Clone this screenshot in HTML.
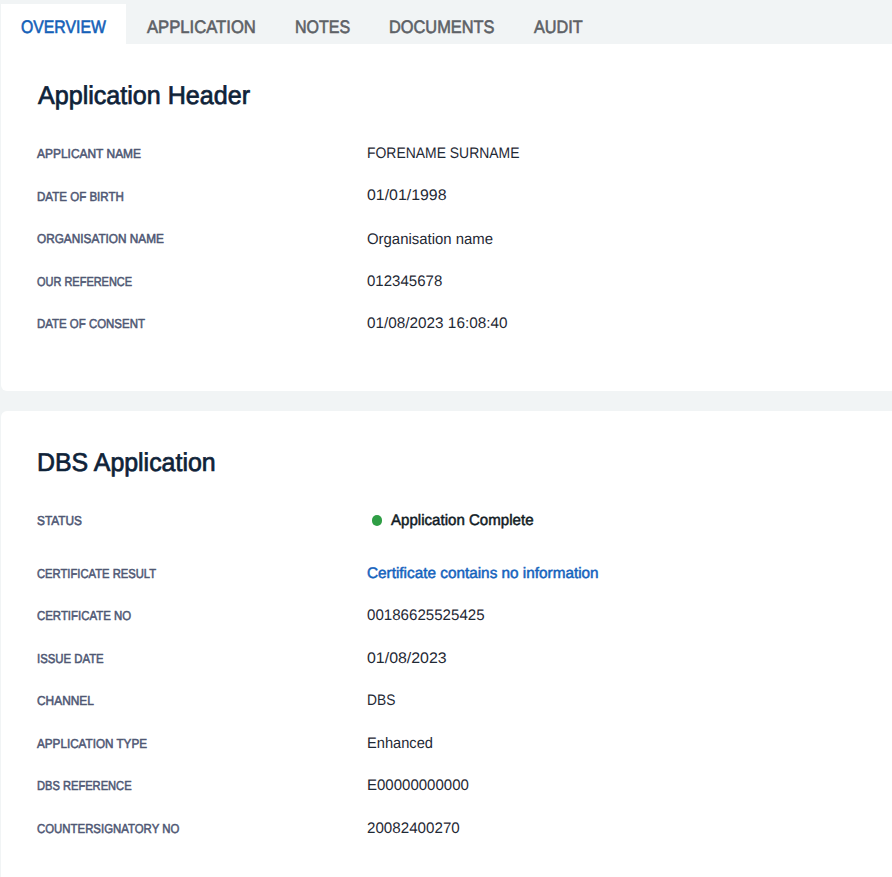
<!DOCTYPE html>
<html><head><meta charset="utf-8"><style>
html,body{margin:0;padding:0;}
body{width:892px;height:877px;overflow:hidden;background:#f1f4f5;position:relative;font-family:"Liberation Sans",sans-serif;}
.t{position:absolute;white-space:nowrap;transform-origin:0 0;text-rendering:geometricPrecision;}
.tabbar{position:absolute;left:0;top:0;width:892px;height:44px;background:#f1f4f5;}
.tab-active{position:absolute;left:1px;top:4px;width:125px;height:41px;background:#fff;}
.card{position:absolute;left:1px;width:1000px;background:#fff;border-radius:6px;}
.dot{position:absolute;left:371.7px;top:515.1px;width:10.5px;height:10.5px;border-radius:50%;background:#2f9e45;}
</style></head><body>
<div class="tabbar"></div>
<div class="card" style="top:44px;height:347px;border-top-left-radius:0;"></div>
<div class="card" style="top:411px;height:600px;"></div>
<div class="tab-active"></div>
<div class="dot"></div>
<div class="t" style="left:21.18px;top:18.08px;font-size:18.1px;line-height:18.1px;color:#1461b8;-webkit-text-stroke:0.6px #1461b8;transform:scaleX(0.8732)">OVERVIEW</div>
<div class="t" style="left:146.94px;top:18.07px;font-size:18.1px;line-height:18.1px;color:#5d6166;-webkit-text-stroke:0.6px #5d6166;transform:scaleX(0.9201)">APPLICATION</div>
<div class="t" style="left:294.64px;top:18.04px;font-size:18.1px;line-height:18.1px;color:#5d6166;-webkit-text-stroke:0.6px #5d6166;transform:scaleX(0.8847)">NOTES</div>
<div class="t" style="left:389.05px;top:18.04px;font-size:18.1px;line-height:18.1px;color:#5d6166;-webkit-text-stroke:0.6px #5d6166;transform:scaleX(0.9045)">DOCUMENTS</div>
<div class="t" style="left:534.43px;top:17.99px;font-size:18.1px;line-height:18.1px;color:#5d6166;-webkit-text-stroke:0.6px #5d6166;transform:scaleX(0.8960)">AUDIT</div>
<div class="t" style="left:37.64px;top:83.68px;font-size:25.8px;line-height:25.8px;color:#0e2238;-webkit-text-stroke:0.7px #0e2238;transform:scaleX(0.9726)">Application Header</div>
<div class="t" style="left:37.22px;top:450.68px;font-size:25.8px;line-height:25.8px;color:#0e2238;-webkit-text-stroke:0.7px #0e2238;transform:scaleX(0.9656)">DBS Application</div>
<div class="t" style="left:37.38px;top:147.23px;font-size:13.0px;line-height:13.0px;color:#4f5874;-webkit-text-stroke:0.55px #4f5874;transform:scaleX(0.9192)">APPLICANT NAME</div>
<div class="t" style="left:36.95px;top:190.04px;font-size:13.0px;line-height:13.0px;color:#4f5874;-webkit-text-stroke:0.55px #4f5874;transform:scaleX(0.8885)">DATE OF BIRTH</div>
<div class="t" style="left:37.23px;top:232.43px;font-size:13.0px;line-height:13.0px;color:#4f5874;-webkit-text-stroke:0.55px #4f5874;transform:scaleX(0.9073)">ORGANISATION NAME</div>
<div class="t" style="left:37.24px;top:275.19px;font-size:13.0px;line-height:13.0px;color:#4f5874;-webkit-text-stroke:0.55px #4f5874;transform:scaleX(0.8441)">OUR REFERENCE</div>
<div class="t" style="left:36.96px;top:317.28px;font-size:13.0px;line-height:13.0px;color:#4f5874;-webkit-text-stroke:0.55px #4f5874;transform:scaleX(0.8805)">DATE OF CONSENT</div>
<div class="t" style="left:36.88px;top:514.34px;font-size:13.0px;line-height:13.0px;color:#4f5874;-webkit-text-stroke:0.55px #4f5874;transform:scaleX(0.9111)">STATUS</div>
<div class="t" style="left:37.00px;top:566.54px;font-size:13.0px;line-height:13.0px;color:#4f5874;-webkit-text-stroke:0.55px #4f5874;transform:scaleX(0.8634)">CERTIFICATE RESULT</div>
<div class="t" style="left:37.00px;top:608.79px;font-size:13.0px;line-height:13.0px;color:#4f5874;-webkit-text-stroke:0.55px #4f5874;transform:scaleX(0.8778)">CERTIFICATE NO</div>
<div class="t" style="left:36.67px;top:651.54px;font-size:13.0px;line-height:13.0px;color:#4f5874;-webkit-text-stroke:0.55px #4f5874;transform:scaleX(0.8734)">ISSUE DATE</div>
<div class="t" style="left:36.98px;top:693.88px;font-size:13.0px;line-height:13.0px;color:#4f5874;-webkit-text-stroke:0.55px #4f5874;transform:scaleX(0.9157)">CHANNEL</div>
<div class="t" style="left:37.08px;top:736.93px;font-size:13.0px;line-height:13.0px;color:#4f5874;-webkit-text-stroke:0.55px #4f5874;transform:scaleX(0.8993)">APPLICATION TYPE</div>
<div class="t" style="left:37.28px;top:778.94px;font-size:13.0px;line-height:13.0px;color:#4f5874;-webkit-text-stroke:0.55px #4f5874;transform:scaleX(0.8556)">DBS REFERENCE</div>
<div class="t" style="left:37.00px;top:821.73px;font-size:13.0px;line-height:13.0px;color:#4f5874;-webkit-text-stroke:0.55px #4f5874;transform:scaleX(0.8769)">COUNTERSIGNATORY NO</div>
<div class="t" style="left:366.79px;top:145.57px;font-size:15.3px;line-height:15.3px;color:#1f2935;transform:scaleX(0.9107)">FORENAME SURNAME</div>
<div class="t" style="left:366.61px;top:188.18px;font-size:15.3px;line-height:15.3px;color:#1f2935;transform:scaleX(1.0382)">01/01/1998</div>
<div class="t" style="left:366.53px;top:231.60px;font-size:15.3px;line-height:15.3px;color:#1f2935;transform:scaleX(0.9754)">Organisation name</div>
<div class="t" style="left:366.64px;top:273.72px;font-size:15.3px;line-height:15.3px;color:#1f2935;transform:scaleX(0.9829)">012345678</div>
<div class="t" style="left:366.62px;top:316.40px;font-size:15.3px;line-height:15.3px;color:#1f2935;transform:scaleX(1.0007)">01/08/2023 16:08:40</div>
<div class="t" style="left:391.30px;top:513.12px;font-size:15.3px;line-height:15.3px;color:#111b24;-webkit-text-stroke:0.5px #111b24;transform:scaleX(0.9860)">Application Complete</div>
<div class="t" style="left:366.59px;top:565.68px;font-size:15.3px;line-height:15.3px;color:#1563bd;-webkit-text-stroke:0.5px #1563bd;transform:scaleX(1.0016)">Certificate contains no information</div>
<div class="t" style="left:366.63px;top:607.87px;font-size:15.3px;line-height:15.3px;color:#1f2935;transform:scaleX(0.9876)">00186625525425</div>
<div class="t" style="left:366.91px;top:651.28px;font-size:15.3px;line-height:15.3px;color:#1f2935;transform:scaleX(1.0408)">01/08/2023</div>
<div class="t" style="left:366.56px;top:692.97px;font-size:15.3px;line-height:15.3px;color:#1f2935;transform:scaleX(0.9018)">DBS</div>
<div class="t" style="left:367.05px;top:735.89px;font-size:15.3px;line-height:15.3px;color:#1f2935;transform:scaleX(0.9580)">Enhanced</div>
<div class="t" style="left:366.72px;top:777.60px;font-size:15.3px;line-height:15.3px;color:#1f2935;transform:scaleX(0.9814)">E00000000000</div>
<div class="t" style="left:366.80px;top:820.95px;font-size:15.3px;line-height:15.3px;color:#1f2935;transform:scaleX(0.9912)">20082400270</div>
</body></html>
